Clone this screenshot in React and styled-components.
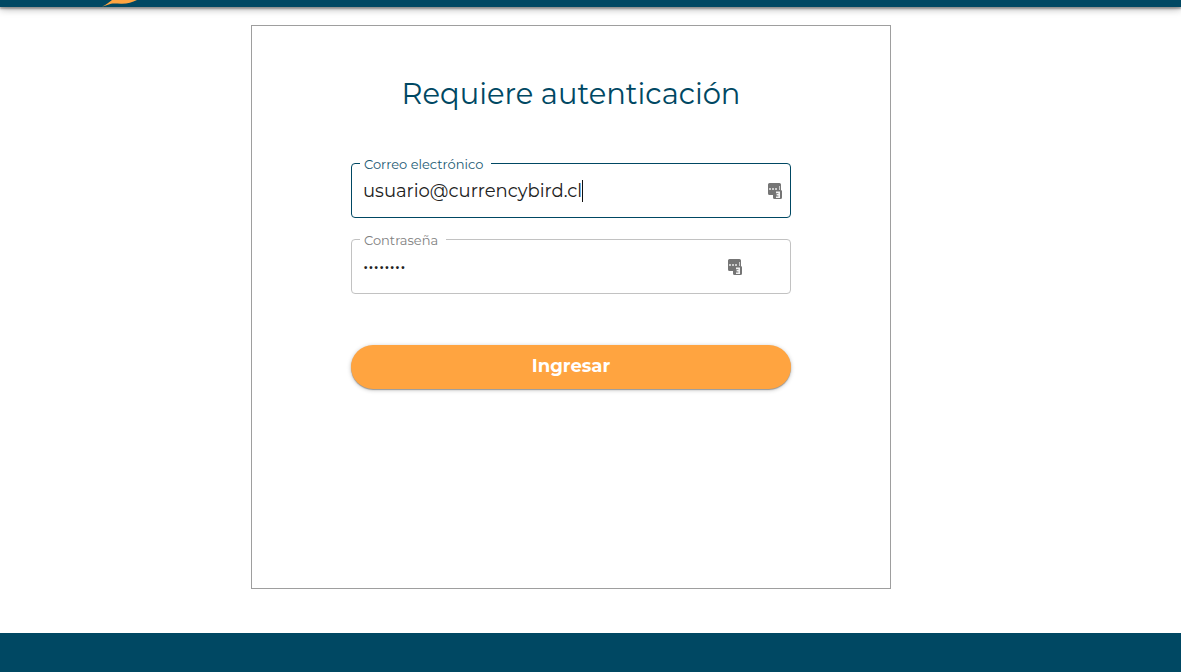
import React, { useState } from 'react';
import styled, { createGlobalStyle } from 'styled-components';

const GlobalStyle = createGlobalStyle`
  *, *::before, *::after { box-sizing: border-box; }
  body {
    margin: 0;
    background: #fff;
    color: #212121;
    font-family: Montserrat, Inter, "Liberation Sans", sans-serif;
  }
`;

const Page = styled.div`
  min-height: 100vh;
  display: flex;
  flex-direction: column;
`;

const Header = styled.header`
  height: 7px;
  flex: none;
  padding-left: 100px;
  background: #004863;
  box-shadow: 0 2px 2px rgba(0, 0, 0, 0.3), 0 1px 8px rgba(0, 0, 0, 0.4);
`;

const LogoTip = styled.svg`
  display: block;
`;

const Main = styled.main`
  flex: 1;
  padding: 18px 39px 44px 0;
`;

const Card = styled.section`
  max-width: 640px;
  min-height: 564px;
  margin: 0 auto;
  padding: 48px 99px;
  border: 1px solid #9e9e9e;
`;

const Title = styled.h1`
  margin: 0 0 40px;
  color: #004863;
  font-size: 29px;
  font-weight: 400;
  line-height: 40px;
  text-align: center;
`;

const Form = styled.form`
  display: flex;
  flex-direction: column;
  gap: 12px;
`;

const FieldBox = styled.fieldset`
  height: 64px;
  min-width: 0;
  margin: 0;
  padding: 0 8px;
  border: 1px solid ${(p) => (p.$active ? '#004863' : '#c2c2c2')};
  border-radius: 4px;
`;

const Legend = styled.legend`
  padding: 2px 8px 0 4px;
  color: ${(p) => (p.$active ? '#1b5a73' : '#808080')};
  font-size: 13px;
  line-height: 16px;
`;

const FieldRow = styled.div`
  height: 38px;
  display: flex;
  align-items: center;
  padding-left: 3px;
`;

const Input = styled.input`
  field-sizing: content;
  min-width: 0;
  height: 24px;
  padding: 0;
  border: 0;
  outline: 0;
  background: transparent;
  color: #212121;
  caret-color: transparent;
  font-family: inherit;
  font-size: 18px;
  font-weight: 400;
`;

const Caret = styled.span`
  width: 1px;
  height: 22px;
  background: #111;
`;

const ManagerIcon = styled.svg`
  flex: none;
  margin-left: auto;
  margin-right: ${(p) => (p.$inset ? 40 : 0)}px;
`;

const Submit = styled.button`
  height: 44px;
  margin-top: 39px;
  padding: 0 0 2px;
  border: 0;
  border-radius: 22px;
  background: #ffa440;
  box-shadow: 0 1px 1px rgba(0, 0, 0, 0.3), 0 1px 4px rgba(0, 0, 0, 0.25);
  color: #fff;
  font-family: inherit;
  font-size: 18px;
  font-weight: 700;
  line-height: 24px;
  cursor: pointer;
`;

const Footer = styled.footer`
  height: 39px;
  flex: none;
  background: #004863;
`;

function Field({ id, label, type, initial, active, inset }) {
  const [value, setValue] = useState(initial);
  return (
    <FieldBox $active={active}>
      <Legend $active={active}>
        <label htmlFor={id}>{label}</label>
      </Legend>
      <FieldRow>
        <Input id={id} type={type} value={value} onChange={(e) => setValue(e.target.value)} />
        {active && <Caret />}
        <ManagerIcon $inset={inset} width="14" height="16" viewBox="0 0 14 16" aria-hidden="true">
          <path
            fill="#757575"
            d="M1.5 0h10A1.5 1.5 0 0 1 13 1.5V7a1.5 1.5 0 0 1 1 1.5v6a1.5 1.5 0 0 1-1.5 1.5h-6A1.5 1.5 0 0 1 5 14.5V12H1.5A1.5 1.5 0 0 1 0 10.5v-9A1.5 1.5 0 0 1 1.5 0z"
          />
          <path fill="#ccc" d="M1 5h2v2H1zM4 5h2v2H4zM7 5h2v2H7zM11 3h1v4h-1z" />
          <path fill="none" stroke="#f2f2f2" strokeWidth="1.6" d="M8 9.4h3.2v4.8H8M8.6 11.8h2.6" />
        </ManagerIcon>
      </FieldRow>
    </FieldBox>
  );
}

export default function App() {
  return (
    <Page>
      <GlobalStyle />
      <Header>
        <LogoTip width="40" height="7" viewBox="0 0 40 7" aria-hidden="true">
          <path fill="#ffa440" d="M2 6.6C6 4.8 9 2.5 12 0h25C32 2.6 27 4 21 3.8C17 3.7 14 3.2 11 3.8C8 4.5 5 6 2 6.6z" />
        </LogoTip>
      </Header>
      <Main>
        <Card>
          <Title>Requiere autenticación</Title>
          <Form onSubmit={(e) => e.preventDefault()}>
            <Field id="email" label="Correo electrónico" type="text" initial="usuario@currencybird.cl" active />
            <Field id="password" label="Contraseña" type="password" initial="12345678" inset />
            <Submit type="submit">Ingresar</Submit>
          </Form>
        </Card>
      </Main>
      <Footer />
    </Page>
  );
}
